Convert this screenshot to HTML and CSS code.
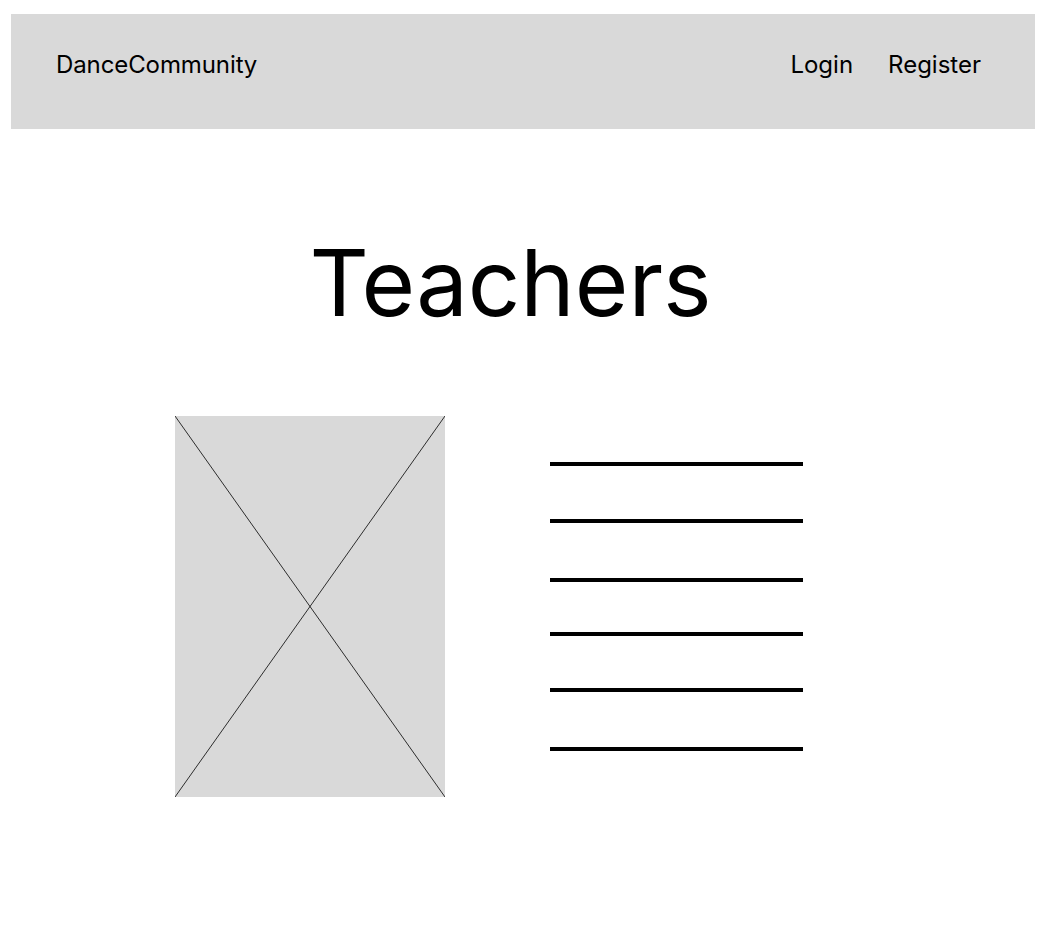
FILE: index.html
```html
<!DOCTYPE html>
<html>
<head>
<meta charset="utf-8">
<link rel="stylesheet" href="styles.css">
</head>
<body>
<header class="topbar">
  <div class="brand">DanceCommunity</div>
  <nav class="nav">
    <a class="nav-link">Login</a>
    <a class="nav-link">Register</a>
  </nav>
</header>
<h1 class="title">Teachers</h1>
<section class="teacher">
  <div class="photo">
    <svg width="270" height="381" viewBox="0 0 270 381" preserveAspectRatio="none">
      <line x1="0" y1="0" x2="270" y2="381" stroke="#000" stroke-width="0.8"/>
      <line x1="270" y1="0" x2="0" y2="381" stroke="#000" stroke-width="0.8"/>
    </svg>
  </div>
  <div class="lines">
    <div class="line"></div>
    <div class="line"></div>
    <div class="line"></div>
    <div class="line"></div>
    <div class="line"></div>
    <div class="line"></div>
  </div>
</section>
</body>
</html>
```
FILE: styles.css
```css
* { box-sizing: border-box; }
html, body { margin: 0; padding: 0; background: #fff; }
body {
  font-family: Inter, "Noto Sans", sans-serif;
  color: #000;
  padding-top: 14px;
}
.topbar {
  margin: 0 17px 0 11px;
  height: 115px;
  background: #d9d9d9;
  display: flex;
  justify-content: space-between;
  align-items: flex-start;
  padding: 39px 54px 0 45px;
}
.brand, .nav-link {
  font-size: 24px;
  line-height: 24px;
}
.brand { letter-spacing: -0.1px; }
.nav { display: flex; gap: 35px; }
.title {
  margin: 107px 0 0;
  padding-right: 31px;
  text-align: center;
  font-weight: 400;
  font-size: 92px;
  line-height: 94px;
}
.teacher {
  margin-top: 86px;
  padding-left: 175px;
  display: flex;
  gap: 105px;
  align-items: flex-start;
}
.photo {
  width: 270px;
  height: 381px;
  background: #d9d9d9;
}
.photo svg { display: block; }
.lines {
  margin-top: 46px;
  width: 253px;
  display: flex;
  flex-direction: column;
}
.line { height: 4px; background: #000; }
.line:nth-child(2) { margin-top: 53px; }
.line:nth-child(3) { margin-top: 55px; }
.line:nth-child(4) { margin-top: 50px; }
.line:nth-child(5) { margin-top: 52px; }
.line:nth-child(6) { margin-top: 55px; }
```
